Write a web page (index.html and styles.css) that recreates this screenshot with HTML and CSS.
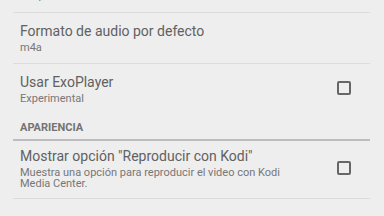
FILE: index.html
```html
<!DOCTYPE html>
<html lang="es">
<head>
  <meta charset="UTF-8">
  <meta name="viewport" content="width=device-width, initial-scale=1.0">
  <title>Ajustes</title>
  <link rel="stylesheet" href="styles.css">
</head>
<body>
  <div class="lista">
    <div class="pref">
      <div class="pref-texto">
        <div class="titulo">Resolución por defecto</div>
        <div class="resumen">360p</div>
      </div>
    </div>

    <div class="pref">
      <div class="pref-texto">
        <div class="titulo">Formato de audio por defecto</div>
        <div class="resumen">m4a</div>
      </div>
    </div>

    <div class="pref sin-linea">
      <div class="pref-texto">
        <div class="titulo">Usar ExoPlayer</div>
        <div class="resumen">Experimental</div>
      </div>
      <span class="casilla"></span>
    </div>

    <!-- Categoria -->
    <div class="categoria">APARIENCIA</div>

    <div class="pref alto">
      <div class="pref-texto">
        <div class="titulo">Mostrar opción "Reproducir con Kodi"</div>
        <div class="resumen">Muestra una opción para reproducir el video con Kodi Media Center.</div>
      </div>
      <span class="casilla"></span>
    </div>
  </div>
</body>
</html>
```

FILE: styles.css
```css
body {
  margin: 0;
  background: #eeeeee;
  font-family: Roboto, "Noto Sans", sans-serif;
  overflow: hidden;
}
.lista {
  margin: -39px 14px 0 13px;
}
.pref {
  display: flex;
  align-items: center;
  padding: 8px 19px 10px 7px;
  border-bottom: 1px solid #dcdcdc;
}
.pref.sin-linea { border-bottom: none; }
.pref.alto { padding: 5px 19px 8px 7px; }
.pref-texto {
  flex: 1;
  max-width: 290px;
}
.titulo {
  font-size: 14px;
  line-height: 20px;
  color: #616161;
  margin-bottom: 1px;
}
.resumen {
  font-size: 11px;
  line-height: 11.5px;
  color: #777777;
}
.casilla {
  width: 14px;
  height: 14px;
  box-sizing: border-box;
  border: 2px solid #666666;
  border-radius: 2px;
  margin-left: auto;
}

/* Categoria */
.categoria {
  padding: 7px 7px 5px;
  font-size: 11px;
  line-height: 12px;
  font-weight: bold;
  color: #737373;
  border-bottom: 2px solid #bdbdbd;
}
```
